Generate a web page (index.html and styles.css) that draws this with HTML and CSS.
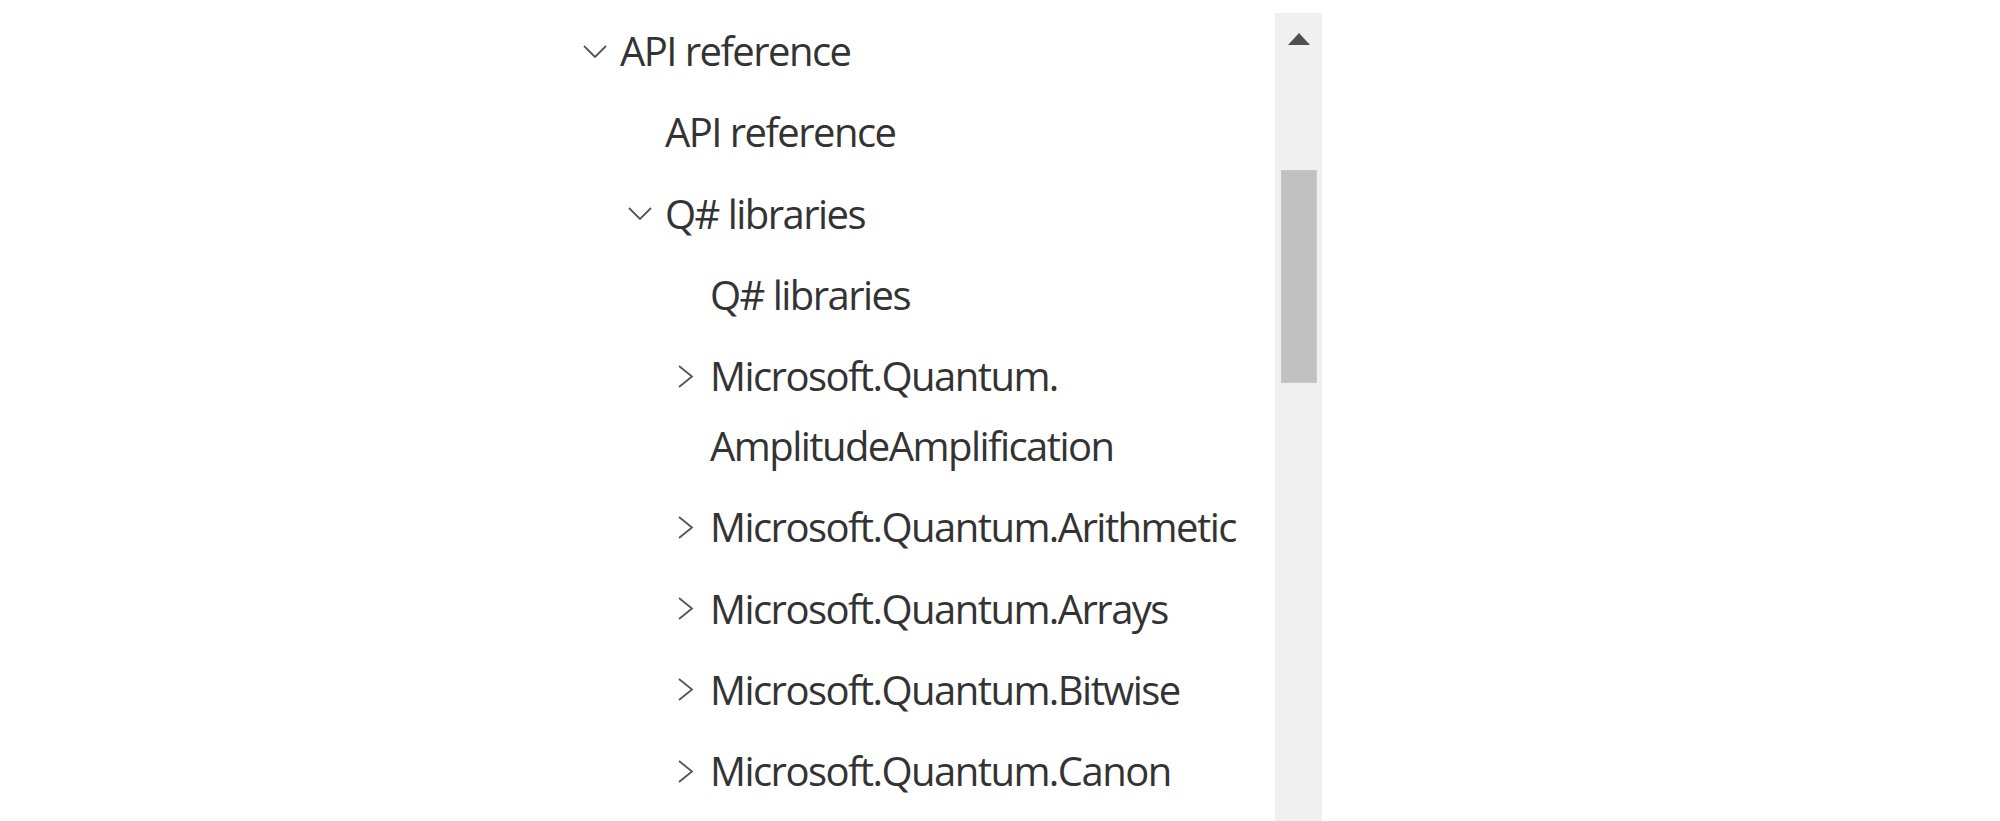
FILE: index.html
```html
<!DOCTYPE html>
<html lang="en">
<head>
<meta charset="utf-8">
<title>API reference</title>
<link rel="stylesheet" href="styles.css">
</head>
<body>
<div class="page">
  <nav class="tree">
    <ul class="level">
      <li class="node">
        <div class="row">
          <span class="toggle"><svg class="chev-down" viewBox="0 0 24 13"><polyline points="1,1 12,12 23,1"/></svg></span>
          <span class="label">API reference</span>
        </div>
        <ul class="level sub">
          <li class="node">
            <div class="row">
              <span class="toggle"></span>
              <span class="label">API reference</span>
            </div>
          </li>
          <li class="node">
            <div class="row">
              <span class="toggle"><svg class="chev-down" viewBox="0 0 24 13"><polyline points="1,1 12,12 23,1"/></svg></span>
              <span class="label">Q# libraries</span>
            </div>
            <ul class="level sub">
              <li class="node">
                <div class="row">
                  <span class="toggle"></span>
                  <span class="label">Q# libraries</span>
                </div>
              </li>
              <li class="node">
                <div class="row">
                  <span class="toggle"><svg class="chev-right" viewBox="0 0 16 23"><polyline points="1,1 14,11.5 1,22"/></svg></span>
                  <span class="label">Microsoft.Quantum.<wbr>AmplitudeAmplification</span>
                </div>
              </li>
              <li class="node">
                <div class="row">
                  <span class="toggle"><svg class="chev-right" viewBox="0 0 16 23"><polyline points="1,1 14,11.5 1,22"/></svg></span>
                  <span class="label">Microsoft.Quantum.Arithmetic</span>
                </div>
              </li>
              <li class="node">
                <div class="row">
                  <span class="toggle"><svg class="chev-right" viewBox="0 0 16 23"><polyline points="1,1 14,11.5 1,22"/></svg></span>
                  <span class="label">Microsoft.Quantum.Arrays</span>
                </div>
              </li>
              <li class="node">
                <div class="row">
                  <span class="toggle"><svg class="chev-right" viewBox="0 0 16 23"><polyline points="1,1 14,11.5 1,22"/></svg></span>
                  <span class="label">Microsoft.Quantum.Bitwise</span>
                </div>
              </li>
              <li class="node">
                <div class="row">
                  <span class="toggle"><svg class="chev-right" viewBox="0 0 16 23"><polyline points="1,1 14,11.5 1,22"/></svg></span>
                  <span class="label">Microsoft.Quantum.Canon</span>
                </div>
              </li>
            </ul>
          </li>
        </ul>
      </li>
    </ul>
  </nav>
  <div class="scrollbar">
    <div class="scroll-up"><svg viewBox="0 0 22 12"><polygon points="11,0 22,12 0,12"/></svg></div>
    <div class="thumb"></div>
  </div>
</div>
</body>
</html>
```
FILE: styles.css
```css
html, body {
  margin: 0;
  padding: 0;
  background: #ffffff;
  height: 100%;
  overflow: hidden;
}

.page {
  display: flex;
  height: 100vh;
  padding-left: 583px;
  box-sizing: border-box;
}

.tree {
  width: 692px;
  padding-top: 11px;
  font-family: "Open Sans", "Noto Sans", sans-serif;
  font-size: 40px;
  color: #333333;
}

.level {
  list-style: none;
  margin: 0;
  padding: 0;
}

.sub {
  padding-left: 45px;
}

.row {
  display: flex;
  align-items: flex-start;
  padding: 5px 0 6.25px;
}

.toggle {
  flex: none;
  width: 37px;
  height: 70px;
  display: flex;
  align-items: center;
}

.label {
  line-height: 70px;
  max-width: 540px;
  letter-spacing: -1.55px;
}

.chev-down {
  width: 24px;
  height: 13px;
  fill: none;
  stroke: #555555;
  stroke-width: 1.8;
}

.chev-right {
  width: 16px;
  height: 23px;
  margin-left: 5px;
  fill: none;
  stroke: #555555;
  stroke-width: 1.8;
}

.scrollbar {
  flex: none;
  width: 47px;
  margin-top: 13px;
  background: #f0f0f0;
  display: flex;
  flex-direction: column;
  align-items: center;
}

.scroll-up {
  height: 12px;
  margin-top: 20px;
  display: flex;
}

.scroll-up svg {
  width: 22px;
  height: 12px;
  fill: #505050;
}

.thumb {
  width: 36px;
  margin-left: 1px;
  height: 213px;
  margin-top: 125px;
  background: #c1c1c1;
  box-shadow: inset 0 0 0 1px #c8c8c8;
}
```
